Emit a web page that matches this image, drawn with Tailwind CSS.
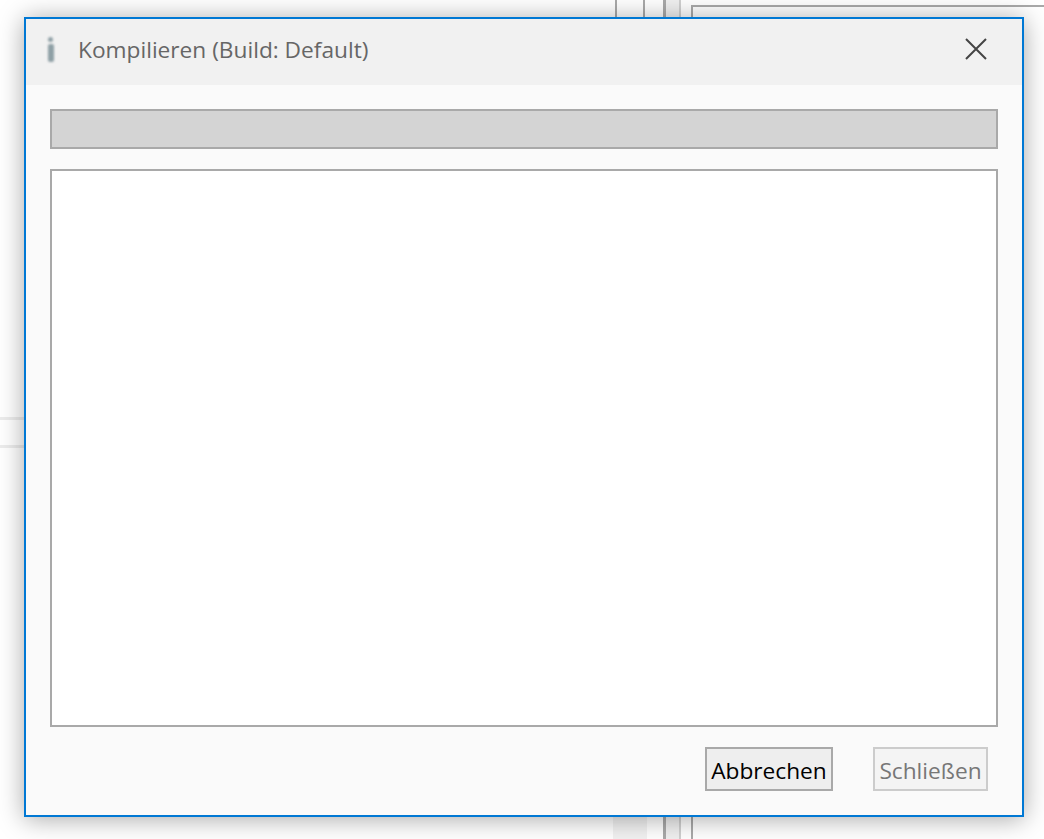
<!DOCTYPE html>
<html lang="en">
<head>
  <meta charset="UTF-8">
  <title>Kompilieren</title>
  <script src="https://cdn.jsdelivr.net/npm/@tailwindcss/browser@4"></script>
</head>
<body class="relative h-[839px] w-[1044px] overflow-hidden bg-white font-['Open_Sans','Noto_Sans',sans-serif]">
  <!-- window behind the dialog -->
  <div class="absolute left-0 top-[417px] h-[3px] w-6 bg-[#ececec]"></div>
  <div class="absolute left-0 top-[445px] h-[3px] w-6 bg-[#ececec]"></div>
  <div class="absolute left-[615px] top-0 h-5 w-[30px] border-x-2 border-[#a9a9a9]"></div>
  <div class="absolute left-[613px] top-[817px] h-[22px] w-[34px] bg-[#f2f2f2]"></div>
  <div class="absolute left-[663px] top-0 h-[839px] w-[18px] border-l-[3px] border-r-2 border-l-[#a9a9a9] border-r-[#d0d0d0] bg-[#f0f0f0]"></div>
  <div class="absolute left-[691px] top-[5px] h-[834px] w-[353px] border-l-2 border-t-2 border-[#a9a9a9]"></div>

  <!-- dialog -->
  <div class="absolute left-6 top-[17px] flex h-[800px] w-[1000px] flex-col border-2 border-[#0078d4] bg-[#fafafa] shadow-[0_2px_24px_rgba(0,0,0,0.35)]">
    <div class="flex h-[66px] shrink-0 items-start bg-[#f1f1f1] pl-[21px] pr-[34px]">
      <div class="mt-[18px] flex w-[7px] flex-col items-center gap-[2px] blur-[1px]">
        <div class="h-[5px] w-[5px] rounded-full bg-[#8fa0a6]"></div>
        <div class="h-[18px] w-[6px] rounded-[2px] bg-[#8fa0a6]"></div>
      </div>
      <div class="ml-[24px] mt-[15px] text-[22.7px] leading-[32px] text-[#666666]">Kompilieren (Build: Default)</div>
      <svg class="ml-auto mt-[18px]" width="24" height="24" viewBox="0 0 24 24" fill="none" stroke="#444444" stroke-width="2"><path d="M2 2L22 22M22 2L2 22"/></svg>
    </div>
    <div class="flex min-h-0 flex-1 flex-col px-6 pb-6 pt-6">
      <div class="h-10 shrink-0 border-2 border-[#a9a9a9] bg-[#d4d4d4]"></div>
      <div class="mt-5 h-[558px] shrink-0 border-2 border-[#a9a9a9] bg-white"></div>
      <div class="mt-5 flex justify-end gap-10 pr-[10px]">
        <button class="h-11 w-32 border-2 border-[#a9a9a9] bg-[#eeeeee] pt-[4px] text-[22.7px] text-black">Abbrechen</button>
        <button class="h-11 w-[115px] border-2 border-[#cccccc] bg-[#f4f4f4] pt-[4px] text-[22.7px] text-[#777777]">Schließen</button>
      </div>
    </div>
  </div>
</body>
</html>
